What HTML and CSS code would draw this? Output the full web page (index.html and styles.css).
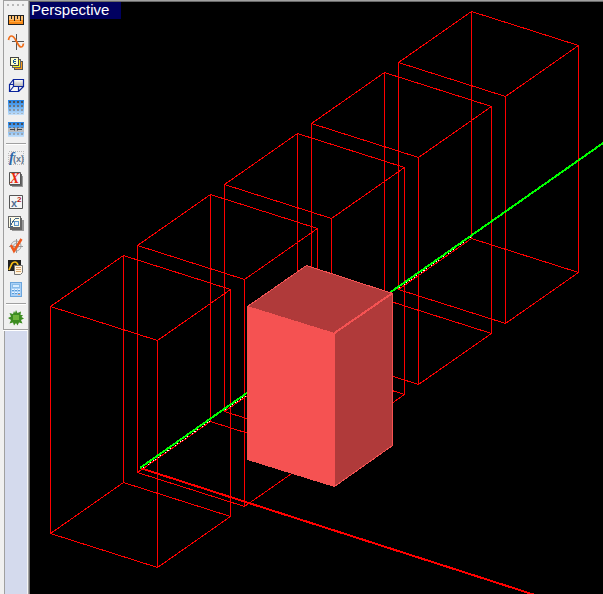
FILE: index.html
```html
<!DOCTYPE html>
<html lang="en">
<head>
<meta charset="utf-8">
<title>Perspective</title>
<link rel="stylesheet" href="styles.css">
</head>
<body>
<div class="app">
  <aside class="dock">
    <div class="toolbar" role="toolbar" aria-label="Tools">
      <div class="grip"></div>
      <button class="tool" aria-label="Ruler"><svg viewBox="0 0 16 16" shape-rendering="crispEdges">
        <path fill="#222" d="M0 3h16v10H0z"/><path fill="#ffc173" d="M1 4h14v4H1z"/><path fill="#f88a18" d="M1 8h14v4H1z"/><path fill="#ffab45" d="M2 9h12v1H2z"/>
        <path stroke="#222" d="M3.5 3v4M6.5 3v6M9.5 3v4M12.5 3v6"/></svg></button>
      <button class="tool" aria-label="Curve"><svg viewBox="0 0 16 16">
        <path stroke="#555" d="M4 7.500h12M8.500 0v16" shape-rendering="crispEdges"/><path fill="none" stroke="#ef6c19" stroke-width="1.700" d="M.5 6C1 3 2 2 3.500 2C6 2 7 5 8.500 7.500S11 13 13 13Q15 13 15.500 9.500"/></svg></button>
      <button class="tool" aria-label="Element pages"><svg viewBox="0 0 16 16" shape-rendering="crispEdges">
        <path fill="#fb9a1d" stroke="#555" d="M6.500 5.500h8v8h-8z"/><path fill="#f5f42c" stroke="#666" d="M4.500 3.500h8v8h-8z"/><path fill="#ffffc8" stroke="#444" d="M2.500 1.500h8v8h-8z"/>
        <path fill="none" stroke="#14559b" d="M8 3.500H6M5.500 4v3M6 5.500h2M6 7.500h2"/></svg></button>
      <button class="tool" aria-label="Box"><svg viewBox="0 0 16 16">
        <defs><linearGradient id="silver" x2="0" y2="1"><stop stop-color="#fff"/><stop offset="1" stop-color="#b4b4b4"/></linearGradient></defs>
        <path fill="#f5f5f5" stroke="#0c259b" stroke-width="1.200" d="M1.500 6.500h9v7h-9zM1.500 6.500l4-5M1.500 13.500l4-5M10.500 13.500l5-5M10.500 6.500l5-5"/><path fill="url(#silver)" stroke="#0c259b" stroke-width="1.200" d="M5.500 1.500h10v7h-10z"/></svg></button>
      <button class="tool" aria-label="Table"><svg viewBox="0 0 16 16" shape-rendering="crispEdges">
        <defs><linearGradient id="sky" x2="0" y2="1"><stop stop-color="#2581e2"/><stop offset=".35" stop-color="#55a2ee"/><stop offset="1" stop-color="#c8e2fa"/></linearGradient></defs>
        <path fill="url(#sky)" d="M0 0h16v15H0z"/><path stroke="#484d57" stroke-width="2" stroke-dasharray="2 2" d="M1 2h14"/><path stroke="#66707e" stroke-width="2" stroke-dasharray="2 2" d="M1 6h14"/><path stroke="#8695a5" stroke-width="2" stroke-dasharray="2 2" d="M1 10h14"/><path stroke="#a7b7c6" stroke-dasharray="2 2" d="M1 13.500h14"/></svg></button>
      <button class="tool" aria-label="Split table"><svg viewBox="0 0 16 16" shape-rendering="crispEdges">
        <path fill="url(#sky)" d="M0 0h16v15H0z"/><path stroke="#484d57" stroke-width="2" stroke-dasharray="2 2" d="M1 2h14"/><path stroke="#687687" stroke-dasharray="2 2" d="M1 5.500h14"/><path fill="#b9bdc2" d="M0 6h16v4H0z"/><path stroke="#444" d="M2 7.500h5M9 7.500h5"/><path stroke="#777" d="M6 6.500h1M9 6.500h1M6 8.500h1M9 8.500h1"/><path stroke="#96a6b6" stroke-width="2" stroke-dasharray="2 2" d="M1 12h14"/></svg></button>
      <hr class="rule">
      <button class="tool" aria-label="Function"><svg viewBox="0 0 16 16">
        <path fill="none" stroke="#bbb" stroke-dasharray="1 1" d="M.5 1.500h15v13H.5z" shape-rendering="crispEdges"/><text class="glyph-f" x="1" y="12">f</text><text class="glyph-arg" x="5" y="12">(x)</text></svg></button>
      <button class="tool" aria-label="Variable"><svg viewBox="0 0 16 16">
        <path fill="#999" d="M4 4h11v11H4z"/><path fill="#666" d="M2 2h12v12H2z"/><path fill="#f3f3f3" stroke="#555" d="M1.500.5h11v12h-11z"/><text class="glyph-var" x="2" y="11">X</text></svg></button>
      <button class="tool" aria-label="Square"><svg viewBox="0 0 16 16">
        <path fill="#f5f5f5" stroke="#555" d="M1.500 1.500h13v13h-13z"/><text class="glyph-base" x="3" y="13">x</text><text class="glyph-power" x="9" y="8">2</text></svg></button>
      <button class="tool" aria-label="Graph pages"><svg viewBox="0 0 16 16" shape-rendering="crispEdges">
        <path fill="#999" d="M4 4h12v11H4z"/><path fill="#666" d="M2 2h12v12H2z"/><path fill="#fffbe5" stroke="#666" d="M.5.5h12v11H.5z"/><path fill="none" stroke="#44688c" d="M2.500 2v8H5M3 9l3-5 2-2h3"/><path fill="#e6f1fb" stroke="#5b95c8" d="M6.500 5.500h4v4h-4z"/></svg></button>
      <button class="tool" aria-label="Check"><svg viewBox="0 0 16 16">
        <circle cx="8" cy="8" r="5" fill="none" stroke="#a5a5a5"/><circle cx="8" cy="8" r="2.500" fill="none" stroke="#aaa"/><path stroke="#999" d="M1 8.500h14M8.500 1v14"/><path fill="none" stroke="#f05a1e" stroke-width="2.500" d="M3 7l3 6L13.500 1"/></svg></button>
      <button class="tool" aria-label="Plot report"><svg viewBox="0 0 16 16">
        <path fill="#202020" d="M0 0h13v11H0z"/><path fill="none" stroke="#f8bd15" stroke-width="1.700" d="M1 10L4 3.500Q5 2 7 2q2 0 3 3"/><path fill="#fff3df" stroke="#777" d="M6.500 5.500h8v7l-2 2h-6z"/><path stroke="#d8a66d" d="M8 7.500h5M8 9.500h5M8 11.500h5"/></svg></button>
      <button class="tool" aria-label="Calculator"><svg viewBox="0 0 16 16" shape-rendering="crispEdges">
        <path fill="#a9d0f6" stroke="#6ba5dc" d="M2.500.5h11v14h-11z"/><path fill="#d9edff" stroke="#8abce9" d="M4.500 2.500h7v3h-7z"/><path stroke="#e8f4ff" stroke-dasharray="2 1" d="M4 7.500h8M4 10.500h8"/><path stroke="#5b9dd8" stroke-dasharray="2 1" d="M4 8.500h8M4 11.500h8"/><path stroke="#e7a070" d="M10 12.500h2"/></svg></button>
      <hr class="rule">
      <button class="tool" aria-label="Burst"><svg viewBox="0 0 16 16">
        <path fill="#3c8c20" d="M8 0l1.500 3L13 1.500 12.500 5 15 5l-1.500 2L16 8.500 13 10l1.500 3.500-3.500-1L9.500 15.500 8 13l-2 2.500-1-3-3.500 1L3 10 0 8l3-1.500L1.500 3 5 4 6 1l1 2z"/><path fill="#6db53a" d="M5 5h6v5H5z"/></svg></button>
    </div>
  </aside>
  <main class="viewport">
    <h1 class="view-name">Perspective</h1>
    <svg class="scene" viewBox="30 2 573 592" preserveAspectRatio="xMinYMin slice" role="img" aria-label="Row of boxes">
      <defs>
        <path id="wire" d="M123.500 255.500L50.500 306.500L157.500 340.500L230.500 289.500ZM123.500 482.500L50.500 533.500L157.500 567.500L230.500 516.500ZM123.500 255.500V482.500M50.500 306.500V533.500M157.500 340.500V567.500M230.500 289.500V516.500"/>
      </defs>
      <g class="wires">
        <use href="#wire"/>
        <use href="#wire" x="87" y="-61"/>
        <use href="#wire" x="174" y="-122"/>
        <use href="#wire" x="261" y="-183"/>
        <use href="#wire" x="348" y="-244"/>
      </g>
      <path class="axis-x" d="M140 468L535 595"/>
      <path class="overlap" d="M143 468L210 421M225 410L247 395M399 288L471 237"/>
      <path class="axis-y" d="M140 468L606 141"/>
      <path class="side" d="M247.500 306.500L306.500 265.500L392.500 293.500V445.500L334.500 486.500V333.500Z"/>
      <path class="front" d="M247.500 306.500L334.500 333.500V486.500L247.500 459.500Z"/>
      <path class="ridge" d="M334.500 333L392.500 293"/>
    </svg>
  </main>
</div>
</body>
</html>
```
FILE: styles.css
```css
* {
  box-sizing: border-box;
}

body {
  margin: 0;
  background: #f0f0f0;
  font-family: "Liberation Sans", Arial, sans-serif;
}

.app {
  display: flex;
  height: 100vh;
  overflow: hidden;
}

.dock {
  flex: none;
  width: 28px;
  padding-left: 3px;
  background: linear-gradient(to right, #f0f0f0 4px, #a0a0a0 4px 5px, #d4daed 5px 27px, #f5f5f5 27px);
}

.toolbar {
  display: flex;
  flex-direction: column;
  align-items: stretch;
  background: #f0f0f0;
  border-left: 1px solid #a0a0a0;
  border-top: 1px solid #a0a0a0;
  border-bottom: 1px solid #a0a0a0;
  box-shadow: 0 1px #fff;
}

.grip {
  height: 8px;
  margin: 0 2px;
  background: repeating-linear-gradient(to right, transparent 0 1px, #b8b8b8 1px 3px, transparent 3px 5px) 0 3px / 100% 2px no-repeat;
}

.tool {
  display: flex;
  align-items: center;
  justify-content: center;
  height: 22px;
  padding: 0;
  border: 0;
  background: transparent;
}

.tool svg {
  width: 16px;
  height: 16px;
  overflow: visible;
}

.rule {
  height: 2px;
  margin: 2px;
  border: 0;
  border-top: 1px solid #a0a0a0;
  background: #fff;
}

.glyph-f {
  font: italic bold 15px "Liberation Serif", serif;
  fill: #2d67a8;
}

.glyph-arg {
  font: bold 9px "Liberation Sans", sans-serif;
  fill: #61758c;
}

.glyph-var {
  font: italic bold 14px "Liberation Serif", serif;
  fill: #e92b10;
}

.glyph-base {
  font: bold 11px "Liberation Sans", sans-serif;
  fill: #526f93;
}

.glyph-power {
  font: bold 8px "Liberation Sans", sans-serif;
  fill: #b61717;
}

.viewport {
  position: relative;
  flex: 1;
  min-width: 0;
  overflow: hidden;
  background: #000;
  border: 0 solid #696969;
  border-width: 1px 0 0 1px;
  outline: 1px solid #a0a0a0;
  margin: 1px 0 0 1px;
}

.view-name {
  position: absolute;
  top: 0;
  left: 0;
  width: 91px;
  height: 17px;
  margin: 0;
  padding-left: 1px;
  background: #000060;
  color: #fff;
  font-size: 15px;
  font-weight: 400;
  line-height: 16px;
}

.scene {
  display: block;
  width: 100%;
  height: 100%;
  shape-rendering: crispEdges;
}

.wires {
  fill: none;
  stroke: #f00;
}

.axis-x {
  stroke: #f00;
  stroke-width: 2px;
}

.axis-y {
  stroke: #0f0;
  stroke-width: 2px;
}

.overlap {
  fill: none;
  stroke: #fff;
  stroke-dasharray: 1 2;
}

.side {
  fill: #b03a3a;
  stroke: #f55252;
}

.front {
  fill: #f55252;
  stroke: #f55252;
}

.ridge {
  stroke: #f55252;
  stroke-width: 2px;
}
```
